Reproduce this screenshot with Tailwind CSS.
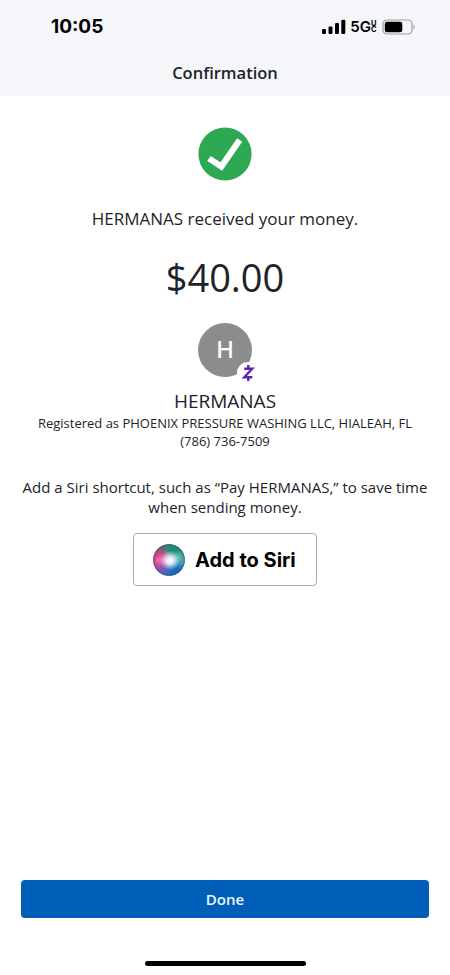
<!DOCTYPE html>
<html lang="en">
<head>
<meta charset="utf-8">
<meta name="viewport" content="width=device-width, initial-scale=1">
<title>Confirmation</title>
<script src="https://cdn.jsdelivr.net/npm/@tailwindcss/browser@4"></script>
</head>
<body class="bg-white">
<div class="flex h-[975px] w-[450px] flex-col overflow-hidden bg-white font-['Open_Sans',sans-serif] text-[#1d2329]">
  <header class="h-24 shrink-0 bg-[#f4f6f9]">
    <div class="flex h-[54px] items-center justify-between pr-[34px] pl-[51px] font-['Inter',sans-serif] text-black">
      <span class="text-[19px] leading-6 font-bold">10:05</span>
      <div class="flex items-center">
        <svg class="h-4 w-6" viewBox="0 0 24 16" aria-hidden="true">
          <rect x="0" y="10" width="4" height="5" rx="1.2"/>
          <rect x="6.5" y="7.5" width="4" height="7.5" rx="1.2"/>
          <rect x="13" y="4" width="4" height="11" rx="1.2"/>
          <rect x="19.3" y="0.8" width="4" height="14.2" rx="1.2"/>
        </svg>
        <span class="ml-1 text-[15px] leading-4 font-semibold">5G</span>
        <span class="flex w-[6px] flex-col text-[7.5px] leading-[6px] font-bold"><span>U</span><span>C</span></span>
        <svg class="ml-[5px] h-4 w-[34px]" viewBox="0 0 34 16" aria-hidden="true">
          <rect x="1" y="1" width="29" height="14" rx="4" fill="none" stroke="#9a9b9d" stroke-width="1.2"/>
          <rect x="2.8" y="2.8" width="17.5" height="10.4" rx="2.2"/>
          <path d="M31.5 5.8c1.3.5 1.3 3.9 0 4.4z" fill="#85878a"/>
        </svg>
      </div>
    </div>
    <h1 class="text-center text-[16.5px] leading-[38px] font-semibold">Confirmation</h1>
  </header>

  <main class="flex grow flex-col items-center pt-[31px] text-center">
    <svg class="h-[54px] w-[54px]" viewBox="0 0 54 54" aria-hidden="true">
      <circle cx="27" cy="27" r="26.6" fill="#2da853"/>
      <path d="M11 31.5 23.3 39.5 41.7 13" fill="none" stroke="#fff" stroke-width="6.2"/>
    </svg>
    <p class="mt-[26px] text-[17px] leading-6">HERMANAS received your money.</p>
    <p class="mt-[20px] text-[38px] leading-[52px]">$40.00</p>
    <div class="relative mt-[20px] h-[54px] w-[54px]">
      <div class="flex h-[54px] w-[54px] items-center justify-center rounded-full bg-[#8b8c8e] font-['Inter',sans-serif] text-[23px] font-medium text-white">H</div>
      <svg class="absolute top-[39px] left-[39px] h-[22px] w-[22px]" viewBox="0 0 22 22" aria-hidden="true">
        <circle cx="11" cy="11" r="11" fill="#fff"/>
        <path d="M7.2 6.7h8L7.3 15.3h8M11.3 3v3.5M11.3 15.5V19" fill="none" stroke="#641fb5" stroke-width="2.4"/>
      </svg>
    </div>
    <h2 class="mt-[11px] text-[19px] leading-[26px]">HERMANAS</h2>
    <p class="text-[13px] leading-[18px]">Registered as PHOENIX PRESSURE WASHING LLC, HIALEAH, FL</p>
    <p class="text-[13px] leading-[18px]">(786) 736-7509</p>
    <p class="mt-[27px] text-[15px] leading-5">Add a Siri shortcut, such as “Pay HERMANAS,” to save time<br>when sending money.</p>
    <button class="mt-4 flex h-[53px] w-[184px] items-center rounded-[4px] border border-[#acacad] bg-white pl-[19px] font-['Inter',sans-serif] text-[20px] font-bold text-black">
      <svg class="h-8 w-8 shrink-0" viewBox="0 0 32 32" aria-hidden="true">
        <defs>
          <clipPath id="orb"><circle cx="16" cy="16" r="15.8"/></clipPath>
          <filter id="soft" x="-30%" y="-30%" width="160%" height="160%"><feGaussianBlur stdDeviation="2.3"/></filter>
          <radialGradient id="glow"><stop offset="0" stop-color="#fff"/><stop offset=".35" stop-color="#f4f3ff" stop-opacity=".9"/><stop offset="1" stop-color="#d7d5ff" stop-opacity="0"/></radialGradient>
          <radialGradient id="rim"><stop offset=".82" stop-color="#344866" stop-opacity="0"/><stop offset="1" stop-color="#344866" stop-opacity=".5"/></radialGradient>
        </defs>
        <g clip-path="url(#orb)">
          <rect width="32" height="32" fill="#57679c"/>
          <g filter="url(#soft)">
            <path d="M-3 5 10 6 17 16 4 26-3 23z" fill="#d8408f"/>
            <path d="M4-3 15-2 17 12 8 9z" fill="#67617c"/>
            <path d="M14-3h20v17l-17 2-4-9z" fill="#159276"/>
            <path d="M17 16l17-5v13l-8 4z" fill="#49a9b4"/>
            <path d="M16 17 33 23 24 35H9z" fill="#176dbb"/>
            <path d="M3 24 16 17 13 34 4 32z" fill="#715bb5"/>
            <path d="M3 14q8-3 14 2-7 5-14 2z" fill="#f178ad"/>
            <path d="M17 16Q24 7 30 10q-4 8-12 7z" fill="#64c4aa"/>
          </g>
          <circle cx="17" cy="16.5" r="10" fill="url(#glow)"/>
          <circle cx="16" cy="16" r="16" fill="url(#rim)"/>
        </g>
      </svg>
      <span class="ml-[10px] whitespace-nowrap">Add to Siri</span>
    </button>
  </main>

  <footer class="flex h-[95px] shrink-0 flex-col items-center">
    <button class="h-[38px] w-[408px] rounded-[4px] bg-[#005eb8] text-[15px] font-semibold text-[#eef6ff]">Done</button>
    <div class="mt-[43px] h-[5px] w-[161px] rounded-full bg-black"></div>
  </footer>
</div>
</body>
</html>
